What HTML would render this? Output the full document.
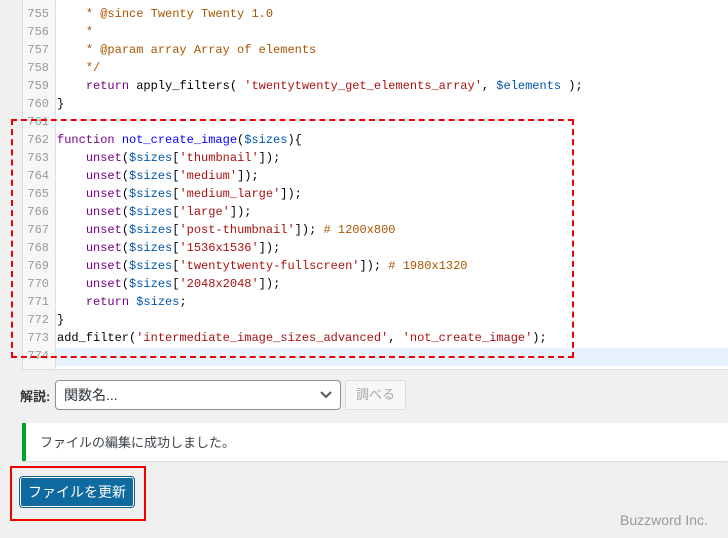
<!DOCTYPE html><html><head><meta charset="utf-8"><style>
body{margin:0;width:728px;height:538px;background:#f0f0f1;position:relative;overflow:hidden;font-family:"Liberation Sans","Noto Sans CJK JP",sans-serif}
.ed{position:absolute;left:22px;top:-2px;width:706px;height:371px;background:#fff;border:1px solid #dcdcde;border-top:none;overflow:hidden}
.gut{position:absolute;left:0;top:0;width:32px;height:100%;background:#f7f7f7;border-right:1px solid #ddd}
.ln{position:absolute;left:0;height:18px;line-height:18px;font:12px "Liberation Mono",monospace;white-space:pre;width:100%}
.ln .n{display:inline-block;width:26px;text-align:right;color:#999;margin-right:8px}
.c{color:#a50}.k{color:#708}.s{color:#a11}.v{color:#05a}.d{color:#00f}
.hl{background:#e8f2ff}
</style></head><body>
<div class="ed"><div class="gut"></div>
<div class="ln" style="top:9px"><span class="n">755</span>    <span class="c">* @since Twenty Twenty 1.0</span></div>
<div class="ln" style="top:27px"><span class="n">756</span>    <span class="c">*</span></div>
<div class="ln" style="top:45px"><span class="n">757</span>    <span class="c">* @param array Array of elements</span></div>
<div class="ln" style="top:63px"><span class="n">758</span>    <span class="c">*/</span></div>
<div class="ln" style="top:81px"><span class="n">759</span>    <span class="k">return</span> apply_filters( <span class="s">'twentytwenty_get_elements_array'</span>, <span class="v">$elements</span> );</div>
<div class="ln" style="top:99px"><span class="n">760</span>}</div>
<div class="ln" style="top:117px"><span class="n">761</span></div>
<div class="ln" style="top:135px"><span class="n">762</span><span class="k">function</span> <span class="d">not_create_image</span>(<span class="v">$sizes</span>){</div>
<div class="ln" style="top:153px"><span class="n">763</span>    <span class="k">unset</span>(<span class="v">$sizes</span>[<span class="s">'thumbnail'</span>]);</div>
<div class="ln" style="top:171px"><span class="n">764</span>    <span class="k">unset</span>(<span class="v">$sizes</span>[<span class="s">'medium'</span>]);</div>
<div class="ln" style="top:189px"><span class="n">765</span>    <span class="k">unset</span>(<span class="v">$sizes</span>[<span class="s">'medium_large'</span>]);</div>
<div class="ln" style="top:207px"><span class="n">766</span>    <span class="k">unset</span>(<span class="v">$sizes</span>[<span class="s">'large'</span>]);</div>
<div class="ln" style="top:225px"><span class="n">767</span>    <span class="k">unset</span>(<span class="v">$sizes</span>[<span class="s">'post-thumbnail'</span>]); <span class="c"># 1200x800</span></div>
<div class="ln" style="top:243px"><span class="n">768</span>    <span class="k">unset</span>(<span class="v">$sizes</span>[<span class="s">'1536x1536'</span>]);</div>
<div class="ln" style="top:261px"><span class="n">769</span>    <span class="k">unset</span>(<span class="v">$sizes</span>[<span class="s">'twentytwenty-fullscreen'</span>]); <span class="c"># 1980x1320</span></div>
<div class="ln" style="top:279px"><span class="n">770</span>    <span class="k">unset</span>(<span class="v">$sizes</span>[<span class="s">'2048x2048'</span>]);</div>
<div class="ln" style="top:297px"><span class="n">771</span>    <span class="k">return</span> <span class="v">$sizes</span>;</div>
<div class="ln" style="top:315px"><span class="n">772</span>}</div>
<div class="ln" style="top:333px"><span class="n">773</span>add_filter(<span class="s">'intermediate_image_sizes_advanced'</span>, <span class="s">'not_create_image'</span>);</div>
<div class="ln hl" style="top:350px;left:33px;width:680px"></div>
<div class="ln" style="top:351px"><span class="n">774</span></div>
<div class="ln" style="top:369px"><span class="n">775</span></div>
</div>
<div style="position:absolute;left:11px;top:119px;width:559px;height:235px;border:2px dashed #e00"></div>
<div style="position:absolute;left:20px;top:386px;font-size:13px;font-weight:bold;color:#333">解説:</div>
<div style="position:absolute;left:55px;top:380px;width:284px;height:28px;background:#fff;border:1px solid #8c8f94;border-radius:4px;font-size:14px;line-height:28px;color:#2c3338;text-indent:8px">関数名...<svg style="position:absolute;right:8px;top:10px" width="12" height="8"><path d="M1 1l5 5 5-5" stroke="#50575e" stroke-width="2" fill="none"/></svg></div>
<div style="position:absolute;left:345px;top:380px;width:59px;height:28px;border:1px solid #dcdcde;border-radius:3px;background:#f6f7f7;color:#a7aaad;font-size:13px;line-height:28px;text-align:center">調べる</div>
<div style="position:absolute;left:22px;top:423px;width:702px;height:38px;background:#fff;border-left:4px solid #00a32a;box-shadow:0 1px 1px rgba(0,0,0,.1);font-size:13px;line-height:40px;color:#3c434a;text-indent:14px">ファイルの編集に成功しました。</div>
<div style="position:absolute;left:10px;top:466px;width:132px;height:51px;border:2px solid #e00"></div>
<div style="position:absolute;left:19px;top:476px;width:114px;height:30px;border:1px solid #135e96;border-radius:4px;box-shadow:inset 0 0 0 1px #fff;color:#fff;font-size:14px;line-height:30px;text-align:center;background:#0f6aa0">ファイルを更新</div>
<div style="position:absolute;left:620px;top:512px;font-size:14px;color:#999">Buzzword Inc.</div>
</body></html>
